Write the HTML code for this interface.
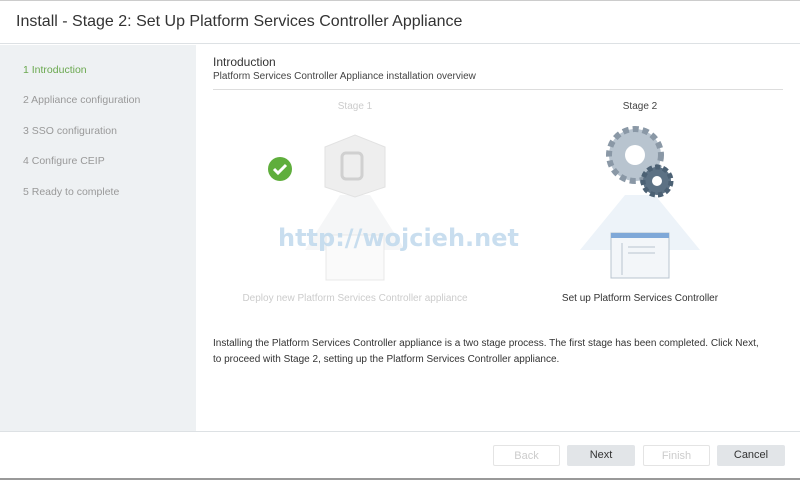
<!DOCTYPE html>
<html><head><style>
body{margin:0;width:800px;height:480px;background:#fff;font-family:"Liberation Sans",sans-serif;position:relative;overflow:hidden}
.hdr{position:absolute;left:0;top:0;width:800px;height:44px;border-bottom:1px solid #dde1e4;border-top:1px solid #ccc;box-sizing:border-box}
.hdr span{position:absolute;left:16px;top:12px;font-size:16px;color:#333}
.side{position:absolute;left:0;top:45px;width:196px;height:386px;background:#eef1f3}
.side div{position:absolute;left:23px;font-size:10.5px;color:#999}
.ttl{position:absolute;left:213px;top:55px;font-size:12px;color:#333}
.sub{position:absolute;left:213px;top:71px;font-size:10px;color:#444}
.rule{position:absolute;left:213px;top:89px;width:570px;height:1px;background:#ddd}
.t{position:absolute;font-size:10px;text-align:center}
.foot{position:absolute;left:0;top:431px;width:800px;height:49px;border-top:1px solid #dde1e4;border-bottom:2px solid #999;box-sizing:border-box}
.b{position:absolute;top:445px;height:21px;box-sizing:border-box;font-size:11px;text-align:center;line-height:20px;border-radius:2px}
</style></head><body>
<div class="hdr"><span>Install - Stage 2: Set Up Platform Services Controller Appliance</span></div>
<div class="side">
<div style="top:19px;color:#6aa84f">1 Introduction</div>
<div style="top:49px">2 Appliance configuration</div>
<div style="top:80px">3 SSO configuration</div>
<div style="top:110px">4 Configure CEIP</div>
<div style="top:141px">5 Ready to complete</div>
</div>
<div class="ttl">Introduction</div>
<div class="sub">Platform Services Controller Appliance installation overview</div>
<div class="rule"></div>
<div class="t" style="left:305px;top:101px;width:100px;color:#ccc">Stage 1</div>
<div class="t" style="left:590px;top:101px;width:100px;color:#444">Stage 2</div>
<svg style="position:absolute;left:230px;top:125px" width="300" height="160">
<polygon points="110,70 140,70 175,125 75,125" fill="#f5f6f7"/>
<polygon points="95,22 125,10 155,22 155,62 125,72 95,62" fill="#eee" stroke="#e2e2e2"/>
<rect x="112" y="28" width="20" height="26" rx="4" fill="none" stroke="#d0d0d0" stroke-width="3"/>
<circle cx="50" cy="44" r="12" fill="#5fae3c"/>
<path d="M44 44l4 4 8-8" stroke="#fff" stroke-width="3" fill="none"/>
<rect x="96" y="110" width="58" height="45" fill="#fafafa" stroke="#e8e8e8"/>
</svg>
<svg style="position:absolute;left:540px;top:125px" width="200" height="160">
<polygon points="85,70 115,70 160,125 40,125" fill="#edf3f9"/>
<circle cx="95" cy="30" r="26" fill="#b8c4cf" stroke="#8a98a6" stroke-dasharray="6 4" stroke-width="6"/>
<circle cx="95" cy="30" r="10" fill="#fff"/>
<circle cx="117" cy="56" r="14" fill="#5c7184" stroke="#4c6174" stroke-dasharray="5 3" stroke-width="5"/>
<circle cx="117" cy="56" r="5" fill="#fff"/>
<rect x="71" y="108" width="58" height="45" fill="#f3f6f9" stroke="#b8c4cf"/>
<rect x="71" y="108" width="58" height="5" fill="#7fa8d8"/>
<line x1="82" y1="118" x2="82" y2="150" stroke="#b8c4cf"/>
<line x1="88" y1="122" x2="115" y2="122" stroke="#b8c4cf"/>
<line x1="88" y1="128" x2="115" y2="128" stroke="#b8c4cf"/>
</svg>
<div style="position:absolute;left:278px;top:224px;font-size:24px;font-weight:bold;color:#bcd7ec;opacity:.8;font-family:'DejaVu Sans',sans-serif">http://wojcieh.net</div>
<div class="t" style="left:220px;top:293px;width:270px;color:#ccc">Deploy new Platform Services Controller appliance</div>
<div class="t" style="left:530px;top:293px;width:220px;color:#333">Set up Platform Services Controller</div>
<div style="position:absolute;left:213px;top:336px;width:585px;font-size:10px;line-height:16px;color:#333">Installing the Platform Services Controller appliance is a two stage process. The first stage has been completed. Click Next,<br>to proceed with Stage 2, setting up the Platform Services Controller appliance.</div>
<div class="foot"></div>
<div class="b" style="left:493px;width:67px;border:1px solid #e4e4e4;color:#ccc">Back</div>
<div class="b" style="left:567px;width:68px;background:#e2e5e8;color:#333">Next</div>
<div class="b" style="left:643px;width:67px;border:1px solid #e4e4e4;color:#ccc">Finish</div>
<div class="b" style="left:717px;width:68px;background:#e2e5e8;color:#333">Cancel</div>
</body></html>
